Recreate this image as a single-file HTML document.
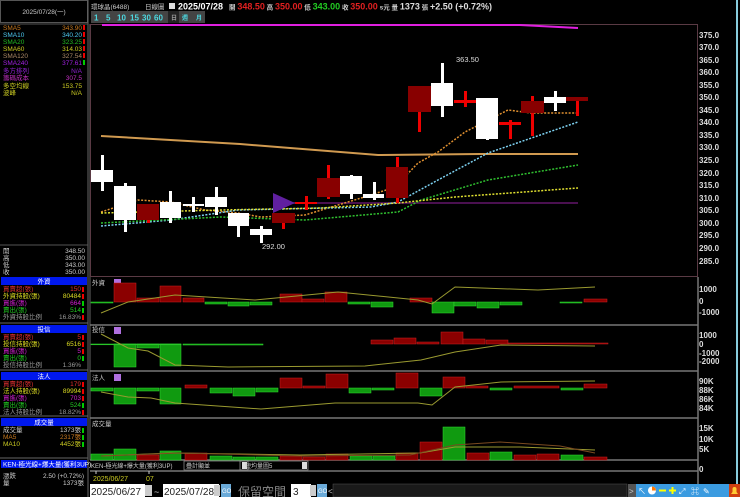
<!DOCTYPE html>
<html><head><meta charset="utf-8"><style>
html,body{margin:0;padding:0;background:#000;width:740px;height:497px;overflow:hidden}
svg{display:block}
text{font-family:"Liberation Sans","Noto Sans CJK TC",sans-serif}
.s{font-size:6.5px}
.ax{font-size:8px;fill:#ddd;font-weight:bold}
</style></head><body>
<svg width="740" height="497" viewBox="0 0 740 497" xmlns="http://www.w3.org/2000/svg">
<rect width="740" height="497" fill="#000"/>
<!-- left panel frame -->
<rect x="0.5" y="0.5" width="87" height="22" fill="none" stroke="#555"/>
<text x="44" y="14" class="s" fill="#ccc" text-anchor="middle">2025/07/28(一)</text>
<line x1="88" y1="0" x2="88" y2="497" stroke="#666"/>
<line x1="0" y1="24" x2="88" y2="24" stroke="#555"/>
<g class="s">
<text x="3" y="30" fill="#c87a20">SMA5</text><text x="82" y="30" fill="#c87a20" text-anchor="end">343.90</text>
<text x="3" y="37" fill="#4cc8f0">SMA10</text><text x="82" y="37" fill="#4cc8f0" text-anchor="end">340.20</text>
<text x="3" y="44" fill="#22bb22">SMA20</text><text x="82" y="44" fill="#22bb22" text-anchor="end">323.25</text>
<text x="3" y="51" fill="#cccc22">SMA60</text><text x="82" y="51" fill="#cccc22" text-anchor="end">314.03</text>
<text x="3" y="58" fill="#aa8866">SMA120</text><text x="82" y="58" fill="#aa8866" text-anchor="end">327.54</text>
<text x="3" y="65" fill="#a020e0">SMA240</text><text x="82" y="65" fill="#a020e0" text-anchor="end">377.61</text>
<text x="3" y="73" fill="#9020d0">多方排列</text><text x="82" y="73" fill="#9020d0" text-anchor="end">N/A</text>
<text x="3" y="80" fill="#c030c0">籌碼成本</text><text x="82" y="80" fill="#c030c0" text-anchor="end">307.5</text>
<text x="3" y="88" fill="#cccc22">多空均線</text><text x="82" y="88" fill="#cccc22" text-anchor="end">153.75</text>
<text x="3" y="95" fill="#cccc22">波峰</text><text x="82" y="95" fill="#cccc22" text-anchor="end">N/A</text>
</g>
<g fill="#e00"><rect x="83" y="25" width="2" height="5"/><rect x="83" y="32" width="2" height="5"/><rect x="83" y="39" width="2" height="5"/><rect x="83" y="46" width="2" height="5"/><rect x="83" y="53" width="2" height="5"/></g>
<rect x="83" y="60" width="2" height="5" fill="#0c0"/>
<line x1="0" y1="245" x2="88" y2="245" stroke="#555"/>
<g class="s" fill="#ccc">
<text x="3" y="253">開</text><text x="85" y="253" text-anchor="end">348.50</text>
<text x="3" y="260">高</text><text x="85" y="260" text-anchor="end">350.00</text>
<text x="3" y="267">低</text><text x="85" y="267" text-anchor="end">343.00</text>
<text x="3" y="274">收</text><text x="85" y="274" text-anchor="end">350.00</text>
</g>
<!-- sections -->
<g class="s">
<rect x="1" y="277" width="86" height="8" fill="#0018ee"/><text x="44" y="283.5" fill="#fff" text-anchor="middle">外資</text>
<text x="3" y="291" fill="#e03030">買賣超(張)</text><text x="81" y="291" fill="#e03030" text-anchor="end">150</text>
<text x="3" y="298" fill="#dddd22">外資持股(張)</text><text x="81" y="298" fill="#dddd22" text-anchor="end">80484</text>
<text x="3" y="305" fill="#d020d0">買進(張)</text><text x="81" y="305" fill="#d020d0" text-anchor="end">664</text>
<text x="3" y="312" fill="#22cc22">賣出(張)</text><text x="81" y="312" fill="#22cc22" text-anchor="end">514</text>
<text x="3" y="319" fill="#999">外資持股比例</text><text x="81" y="319" fill="#999" text-anchor="end">16.83%</text>
<line x1="0" y1="323" x2="88" y2="323" stroke="#666"/>
<rect x="1" y="325" width="86" height="8" fill="#0018ee"/><text x="44" y="331.5" fill="#fff" text-anchor="middle">投信</text>
<text x="3" y="339" fill="#e03030">買賣超(張)</text><text x="81" y="339" fill="#e03030" text-anchor="end">5</text>
<text x="3" y="346" fill="#dddd22">投信持股(張)</text><text x="81" y="346" fill="#dddd22" text-anchor="end">6516</text>
<text x="3" y="353" fill="#d020d0">買進(張)</text><text x="81" y="353" fill="#d020d0" text-anchor="end">5</text>
<text x="3" y="360" fill="#22cc22">賣出(張)</text><text x="81" y="360" fill="#22cc22" text-anchor="end">0</text>
<text x="3" y="367" fill="#999">投信持股比例</text><text x="81" y="367" fill="#999" text-anchor="end">1.36%</text>
<line x1="0" y1="370" x2="88" y2="370" stroke="#666"/>
<rect x="1" y="372" width="86" height="8" fill="#0018ee"/><text x="44" y="378.5" fill="#fff" text-anchor="middle">法人</text>
<text x="3" y="386" fill="#e03030">買賣超(張)</text><text x="81" y="386" fill="#e03030" text-anchor="end">179</text>
<text x="3" y="393" fill="#dddd22">法人持股(張)</text><text x="81" y="393" fill="#dddd22" text-anchor="end">89994</text>
<text x="3" y="400" fill="#d020d0">買進(張)</text><text x="81" y="400" fill="#d020d0" text-anchor="end">703</text>
<text x="3" y="407" fill="#22cc22">賣出(張)</text><text x="81" y="407" fill="#22cc22" text-anchor="end">524</text>
<text x="3" y="414" fill="#999">法人持股比例</text><text x="81" y="414" fill="#999" text-anchor="end">18.82%</text>
<line x1="0" y1="416" x2="88" y2="416" stroke="#666"/>
<rect x="1" y="418" width="86" height="8" fill="#0018ee"/><text x="44" y="424.5" fill="#fff" text-anchor="middle">成交量</text>
<text x="3" y="432" fill="#ccc">成交量</text><text x="81" y="432" fill="#ccc" text-anchor="end">1373張</text>
<text x="3" y="439" fill="#c87a20">MA5</text><text x="81" y="439" fill="#c87a20" text-anchor="end">2317張</text>
<text x="3" y="446" fill="#cccc22">MA10</text><text x="81" y="446" fill="#cccc22" text-anchor="end">4452張</text>
<line x1="0" y1="458" x2="88" y2="458" stroke="#666"/>
<rect x="1" y="460" width="86" height="8" fill="#0018ee"/><text x="3" y="466.5" fill="#fff">KEN-極光線+爆大量(獲利3UP)</text>
<text x="3" y="478" fill="#ccc">漲跌</text><text x="84" y="478" fill="#ccc" text-anchor="end">2.50 (+0.72%)</text>
<text x="3" y="485" fill="#ccc">量</text><text x="84" y="485" fill="#ccc" text-anchor="end">1373張</text>
</g>
<g fill="#e00"><rect x="82" y="287" width="2" height="5"/><rect x="82" y="294" width="2" height="5"/><rect x="82" y="315" width="2" height="5"/><rect x="82" y="335" width="2" height="5"/><rect x="82" y="342" width="2" height="5"/><rect x="82" y="349" width="2" height="5"/><rect x="82" y="382" width="2" height="5"/><rect x="82" y="389" width="2" height="5"/><rect x="82" y="396" width="2" height="5"/><rect x="82" y="410" width="2" height="5"/></g>
<g fill="#0c0"><rect x="82" y="301" width="2" height="5"/><rect x="82" y="308" width="2" height="5"/><rect x="82" y="356" width="2" height="5"/><rect x="82" y="403" width="2" height="5"/><rect x="82" y="428" width="2" height="5"/><rect x="82" y="435" width="2" height="5"/><rect x="82" y="442" width="2" height="5"/></g>

<!-- top bar -->
<text x="91" y="9" class="s" fill="#ccc">環球晶(6488)</text>
<text x="145" y="9" class="s" fill="#ccc">日線圖</text>
<rect x="169" y="3" width="6" height="6" fill="#ddd"/>
<text x="178" y="9.5" font-size="9" font-weight="bold" fill="#fff">2025/07/28</text>
<text x="229" y="9.5" font-size="9" font-weight="bold"><tspan fill="#ccc" font-size="6.5">開 </tspan><tspan fill="#e02020">348.50</tspan><tspan fill="#ccc" font-size="6.5">  高 </tspan><tspan fill="#e02020">350.00</tspan><tspan fill="#ccc" font-size="6.5">  低 </tspan><tspan fill="#22cc22">343.00</tspan><tspan fill="#ccc" font-size="6.5">  收 </tspan><tspan fill="#e02020">350.00</tspan><tspan fill="#ccc" font-size="6.5"> s元  量 </tspan><tspan fill="#ddd">1373</tspan><tspan fill="#ccc" font-size="6.5"> 張  </tspan><tspan fill="#ddd">+2.50 (+0.72%)</tspan></text>
<g font-size="8" font-weight="bold" fill="#4cd8e0">
<rect x="91" y="11" width="114" height="12" fill="#444"/>
<rect x="168" y="11" width="11" height="12" fill="#222"/>
<text x="94" y="20.5">1</text><text x="106" y="20.5">5</text><text x="117" y="20.5">10</text><text x="130" y="20.5">15</text><text x="142" y="20.5">30</text><text x="154" y="20.5">60</text>
<text x="171" y="20" font-size="6" fill="#999">日</text><text x="182" y="20" font-size="6">週</text><text x="196" y="20" font-size="6">月</text>
</g>
<!-- main frame -->
<line x1="90" y1="24" x2="90" y2="460" stroke="#666"/>
<rect x="90.5" y="24.5" width="607" height="252" fill="none" stroke="#5a3a44"/>
<line x1="737" y1="0" x2="737" y2="497" stroke="#8cd" stroke-width="2"/>
<polyline points="102,25 520,25 578,28" fill="none" stroke="#e020e0" stroke-width="2"/>
<!-- axis -->
<g class="ax">
<text x="699" y="38">375.0</text><text x="699" y="50">370.0</text><text x="699" y="63">365.0</text><text x="699" y="75">360.0</text><text x="699" y="88">355.0</text><text x="699" y="100">350.0</text><text x="699" y="113">345.0</text><text x="699" y="125">340.0</text><text x="699" y="138">335.0</text><text x="699" y="150">330.0</text><text x="699" y="163">325.0</text><text x="699" y="176">320.0</text><text x="699" y="188">315.0</text><text x="699" y="201">310.0</text><text x="699" y="213">305.0</text><text x="699" y="226">300.0</text><text x="699" y="238">295.0</text><text x="699" y="251">290.0</text><text x="699" y="264">285.0</text>
<text x="699" y="292">1000</text><text x="699" y="304">0</text><text x="699" y="315">-1000</text>
<text x="699" y="338">1000</text><text x="699" y="347">0</text><text x="699" y="356">-1000</text><text x="699" y="364">-2000</text>
<text x="699" y="384">90K</text><text x="699" y="393">88K</text><text x="699" y="402">86K</text><text x="699" y="411">84K</text>
<text x="699" y="431">15K</text><text x="699" y="442">10K</text><text x="699" y="452">5K</text><text x="699" y="472">0</text>
</g>
<!-- MAs -->
<polyline points="101,136 240,144 378,155 480,154 578,154" fill="none" stroke="#d09a50" stroke-width="2"/>
<line x1="290" y1="203" x2="578" y2="203" stroke="#4a1050" stroke-width="2"/>
<g fill="none" stroke-width="1.5" stroke-dasharray="2,1.5">
<polyline points="101,212 138,200 171,202 205,210 238,213 261,217 305,215 338,205 371,195 395,187 418,163 438,152 465,132 508,110 531,113 578,113" stroke="#e09030"/>
<polyline points="101,226 171,220 238,210 371,207 398,202 438,180 488,153 578,122" stroke="#7cd0f0"/>
<polyline points="101,223 221,217 305,220 398,212 421,200 488,180 578,165" stroke="#30c030"/>
<polyline points="101,213 221,210 321,208 398,203 455,197 578,188" stroke="#e0e030"/>
</g>
<!-- candles -->
<g>
<rect x="101" y="155" width="3" height="36" fill="#fff"/><rect x="91" y="170" width="22" height="12" fill="#fff"/>
<rect x="124" y="183" width="3" height="49" fill="#fff"/><rect x="114" y="186" width="22" height="34" fill="#fff"/>
<rect x="147" y="204" width="3" height="19" fill="#e00"/><rect x="137" y="204" width="22" height="16" fill="#800"/>
<rect x="169" y="191" width="3" height="32" fill="#fff"/><rect x="160" y="202" width="21" height="16" fill="#fff"/>
<rect x="192" y="197" width="3" height="15" fill="#fff"/><rect x="183" y="204" width="21" height="2" fill="#fff"/>
<rect x="215" y="187" width="3" height="28" fill="#fff"/><rect x="205" y="197" width="22" height="10" fill="#fff"/>
<rect x="237" y="213" width="3" height="24" fill="#fff"/><rect x="228" y="213" width="21" height="13" fill="#fff"/>
<rect x="260" y="226" width="3" height="17" fill="#fff"/><rect x="250" y="229" width="22" height="6" fill="#fff"/>
<rect x="282" y="213" width="3" height="16" fill="#e00"/><rect x="272" y="213" width="23" height="10" fill="#800"/>
<polygon points="273,193 273,213 295,203" fill="#6020a0"/>
<rect x="305" y="196" width="3" height="14" fill="#e00"/><rect x="295" y="202" width="22" height="2" fill="#e00"/>
<rect x="327" y="165" width="3" height="34" fill="#e00"/><rect x="317" y="178" width="23" height="19" fill="#800"/>
<rect x="350" y="175" width="3" height="24" fill="#fff"/><rect x="340" y="176" width="22" height="18" fill="#fff"/>
<rect x="373" y="182" width="3" height="18" fill="#fff"/><rect x="363" y="194" width="21" height="4" fill="#fff"/>
<rect x="396" y="157" width="3" height="46" fill="#e00"/><rect x="386" y="167" width="22" height="31" fill="#800"/>
<rect x="418" y="86" width="3" height="46" fill="#e00"/><rect x="408" y="86" width="23" height="26" fill="#800"/>
<rect x="441" y="63" width="3" height="54" fill="#fff"/><rect x="431" y="83" width="22" height="23" fill="#fff"/>
<rect x="464" y="91" width="3" height="16" fill="#e00"/><rect x="454" y="100" width="22" height="3" fill="#e00"/>
<rect x="486" y="98" width="3" height="42" fill="#fff"/><rect x="476" y="98" width="22" height="41" fill="#fff"/>
<rect x="509" y="120" width="3" height="19" fill="#e00"/><rect x="499" y="122" width="22" height="3" fill="#e00"/>
<rect x="531" y="96" width="3" height="40" fill="#e00"/><rect x="521" y="101" width="23" height="12" fill="#800"/>
<rect x="554" y="91" width="3" height="20" fill="#fff"/><rect x="544" y="97" width="22" height="6" fill="#fff"/>
<rect x="576" y="97" width="3" height="19" fill="#e00"/><rect x="566" y="97" width="22" height="4" fill="#800"/>
</g>
<text x="456" y="62" font-size="7.5" fill="#ddd">363.50</text>
<text x="262" y="249" font-size="7.5" fill="#ddd">292.00</text>
<!-- sub panel frames -->
<g fill="none" stroke="#777" stroke-width="1.5">
<line x1="90" y1="325" x2="698" y2="325"/><line x1="90" y1="371" x2="698" y2="371"/><line x1="90" y1="418" x2="698" y2="418"/>
<line x1="698" y1="277" x2="698" y2="497"/>
<line x1="90" y1="460" x2="698" y2="460"/><line x1="90" y1="471" x2="698" y2="471"/>
</g>
<g class="s" fill="#ccc"><text x="92" y="285">外資</text><text x="92" y="332">投信</text><text x="92" y="380">法人</text><text x="92" y="426">成交量</text></g>
<g fill="#b070e0"><rect x="114" y="279" width="7" height="7"/><rect x="114" y="327" width="7" height="7"/><rect x="114" y="374" width="7" height="7"/></g>
<!-- panel1 bars zero 302 -->
<g fill="#8b0000" stroke="#c22" stroke-width=".5">
<rect x="114" y="283" width="22" height="19"/><rect x="137" y="298" width="22" height="4"/><rect x="160" y="286" width="21" height="16"/><rect x="183" y="298" width="21" height="4"/><rect x="280" y="294" width="22" height="8"/><rect x="302" y="299" width="22" height="3"/><rect x="325" y="292" width="22" height="10"/><rect x="410" y="298" width="22" height="4"/><rect x="584" y="299" width="23" height="3"/>
</g>
<g fill="#109a10" stroke="#3d3" stroke-width=".5">
<rect x="91" y="302" width="22" height="1"/><rect x="205" y="302" width="22" height="2"/><rect x="228" y="302" width="21" height="4"/><rect x="250" y="302" width="22" height="3"/><rect x="348" y="302" width="22" height="2"/><rect x="371" y="302" width="22" height="5"/><rect x="432" y="302" width="22" height="11"/><rect x="454" y="302" width="22" height="4"/><rect x="477" y="302" width="22" height="6"/><rect x="500" y="302" width="22" height="3"/><rect x="560" y="302" width="22" height="1"/>
</g>
<polyline points="101,313 128,302 175,295 255,300 338,292 418,300 432,304 455,287 538,290 595,287" fill="none" stroke="#9a9a30" stroke-width="1"/>
<!-- panel2 zero 344 -->
<g fill="#109a10" stroke="#3d3" stroke-width=".5"><rect x="114" y="344" width="22" height="23"/><rect x="137" y="344" width="22" height="4"/><rect x="160" y="344" width="21" height="22"/><rect x="91" y="344" width="90" height="0.8"/><rect x="183" y="344" width="80" height="1"/></g>
<g fill="#8b0000" stroke="#c22" stroke-width=".5"><rect x="371" y="340" width="22" height="4"/><rect x="394" y="338" width="22" height="6"/><rect x="417" y="342" width="22" height="2"/><rect x="441" y="332" width="22" height="12"/><rect x="463" y="339" width="22" height="5"/><rect x="486" y="340" width="22" height="4"/><rect x="508" y="343" width="100" height="1"/></g>
<polyline points="101,334 128,348 148,351 175,365 228,367 365,366 421,360 455,352 501,345 595,346" fill="none" stroke="#9a9a30" stroke-width="1"/>
<!-- panel3 zero 388 -->
<g fill="#109a10" stroke="#3d3" stroke-width=".5"><rect x="91" y="388" width="22" height="3"/><rect x="114" y="388" width="22" height="16"/><rect x="137" y="388" width="22" height="3"/><rect x="160" y="388" width="21" height="16"/><rect x="210" y="388" width="22" height="5"/><rect x="233" y="388" width="22" height="8"/><rect x="256" y="388" width="22" height="4"/><rect x="349" y="388" width="22" height="5"/><rect x="372" y="388" width="22" height="2"/><rect x="420" y="388" width="22" height="8"/><rect x="490" y="388" width="22" height="2"/><rect x="561" y="388" width="22" height="2"/></g>
<g fill="#8b0000" stroke="#c22" stroke-width=".5"><rect x="185" y="385" width="22" height="3"/><rect x="280" y="378" width="22" height="10"/><rect x="303" y="386" width="22" height="2"/><rect x="326" y="374" width="22" height="14"/><rect x="396" y="373" width="22" height="15"/><rect x="443" y="377" width="22" height="11"/><rect x="466" y="386" width="22" height="2"/><rect x="514" y="386" width="45" height="2"/><rect x="584" y="384" width="23" height="4"/></g>
<polyline points="101,392 128,397 151,398 175,403 261,409 335,403 418,403 432,405 455,387 501,382 595,381" fill="none" stroke="#9a9a30" stroke-width="1"/>
<!-- panel4 volume bottom 460 -->
<g fill="#109a10" stroke="#3d3" stroke-width=".5"><rect x="91" y="454" width="22" height="6"/><rect x="114" y="449" width="22" height="11"/><rect x="160" y="451" width="21" height="9"/><rect x="210" y="456" width="22" height="4"/><rect x="233" y="457" width="22" height="3"/><rect x="256" y="457" width="22" height="3"/><rect x="350" y="456" width="22" height="4"/><rect x="373" y="456" width="22" height="4"/><rect x="443" y="427" width="22" height="33"/><rect x="490" y="452" width="22" height="8"/><rect x="561" y="455" width="22" height="5"/></g>
<g fill="#8b0000" stroke="#c22" stroke-width=".5"><rect x="137" y="455" width="22" height="5"/><rect x="185" y="453" width="22" height="7"/><rect x="280" y="456" width="22" height="4"/><rect x="303" y="457" width="22" height="3"/><rect x="326" y="454" width="22" height="6"/><rect x="396" y="453" width="22" height="7"/><rect x="420" y="442" width="22" height="18"/><rect x="467" y="453" width="22" height="7"/><rect x="514" y="455" width="22" height="5"/><rect x="537" y="454" width="22" height="6"/><rect x="584" y="457" width="23" height="3"/></g>
<polyline points="101,456 170,453 300,455 420,453 455,447 520,447 595,450" fill="none" stroke="#9a9a30" stroke-width="1"/>
<polyline points="101,456 180,453 300,456 410,455 455,445 500,442 560,446 595,453" fill="none" stroke="#7a4a20" stroke-width="1"/>
<!-- selector row -->
<text x="91" y="468" font-size="6" fill="#ccc">KEN-極光線+爆大量(獲利3UP)</text>
<rect x="184" y="461" width="64" height="9" fill="none" stroke="#999" stroke-width=".7"/><text x="186" y="468" font-size="6" fill="#ccc">疊計顯並</text><rect x="242" y="462" width="5" height="7" fill="#ddd"/>
<rect x="240" y="461" width="68" height="9" fill="none" stroke="#999" stroke-width=".7"/><text x="245" y="468" font-size="6" fill="#ccc">短均量圖5</text><rect x="302" y="462" width="5" height="7" fill="#ddd"/>
<line x1="96" y1="471" x2="96" y2="474" stroke="#ccc"/><line x1="149" y1="471" x2="149" y2="474" stroke="#ccc"/>
<text x="93" y="481" font-size="7" fill="#cccc22">2025/06/27</text><text x="146" y="481" font-size="7" fill="#cccc22">07</text>
<!-- bottom bar -->
<rect x="90" y="484" width="55" height="13" fill="#fff"/><text x="91" y="495" font-size="10" fill="#222">2025/06/27</text><rect x="145" y="485" width="7" height="11" fill="#ccc"/>
<text x="154" y="495" font-size="9" fill="#ccc">~</text>
<rect x="163" y="484" width="56" height="13" fill="#fff"/><text x="164" y="495" font-size="10" fill="#222">2025/07/28</text><rect x="214" y="485" width="6" height="11" fill="#ccc"/>
<rect x="221" y="484" width="10" height="13" fill="#6aaad8"/><text x="222" y="493" font-size="6" fill="#fff">GO</text>
<text x="238" y="496" font-size="12" fill="#888">保留空間</text>
<rect x="291" y="484" width="20" height="13" fill="#fff"/><text x="293" y="495" font-size="10" fill="#222">3</text><rect x="310" y="485" width="6" height="11" fill="#ccc"/>
<rect x="317" y="484" width="10" height="13" fill="#6aaad8"/><text x="318" y="493" font-size="6" fill="#fff">GO</text>
<text x="328" y="494" font-size="8" fill="#ccc">&lt;</text>
<rect x="333" y="484" width="294" height="13" fill="#1a1a1a" stroke="#555" stroke-width=".5"/>
<rect x="628" y="484" width="8" height="13" fill="#555"/><text x="629" y="494" font-size="8" fill="#ccc">&gt;</text>
<rect x="636" y="484" width="93" height="13" fill="#3b9be0"/>
<text x="638" y="494" font-size="8" fill="#fff">↖</text>
<circle cx="652" cy="490.5" r="4" fill="#fff"/><path d="M652 490.5 L652 486.5 A4 4 0 0 1 656 490.5Z" fill="#f70"/>
<rect x="659" y="489.5" width="7" height="2" fill="#ff0"/>
<rect x="669" y="489.5" width="7" height="2" fill="#ff0"/><rect x="671.5" y="487" width="2" height="7" fill="#ff0"/>
<text x="679" y="494" font-size="8" fill="#fff">⤢</text><text x="691" y="494" font-size="8" fill="#fff">⌘</text><text x="703" y="494" font-size="8" fill="#fff">✎</text>
<rect x="729" y="484" width="11" height="13" fill="#d04010"/><path d="M731 494 h7 l-1.5-2 v-3 a2 2 0 0 0 -4 0 v3 z" fill="#fc3"/>
</svg>
</body></html>
